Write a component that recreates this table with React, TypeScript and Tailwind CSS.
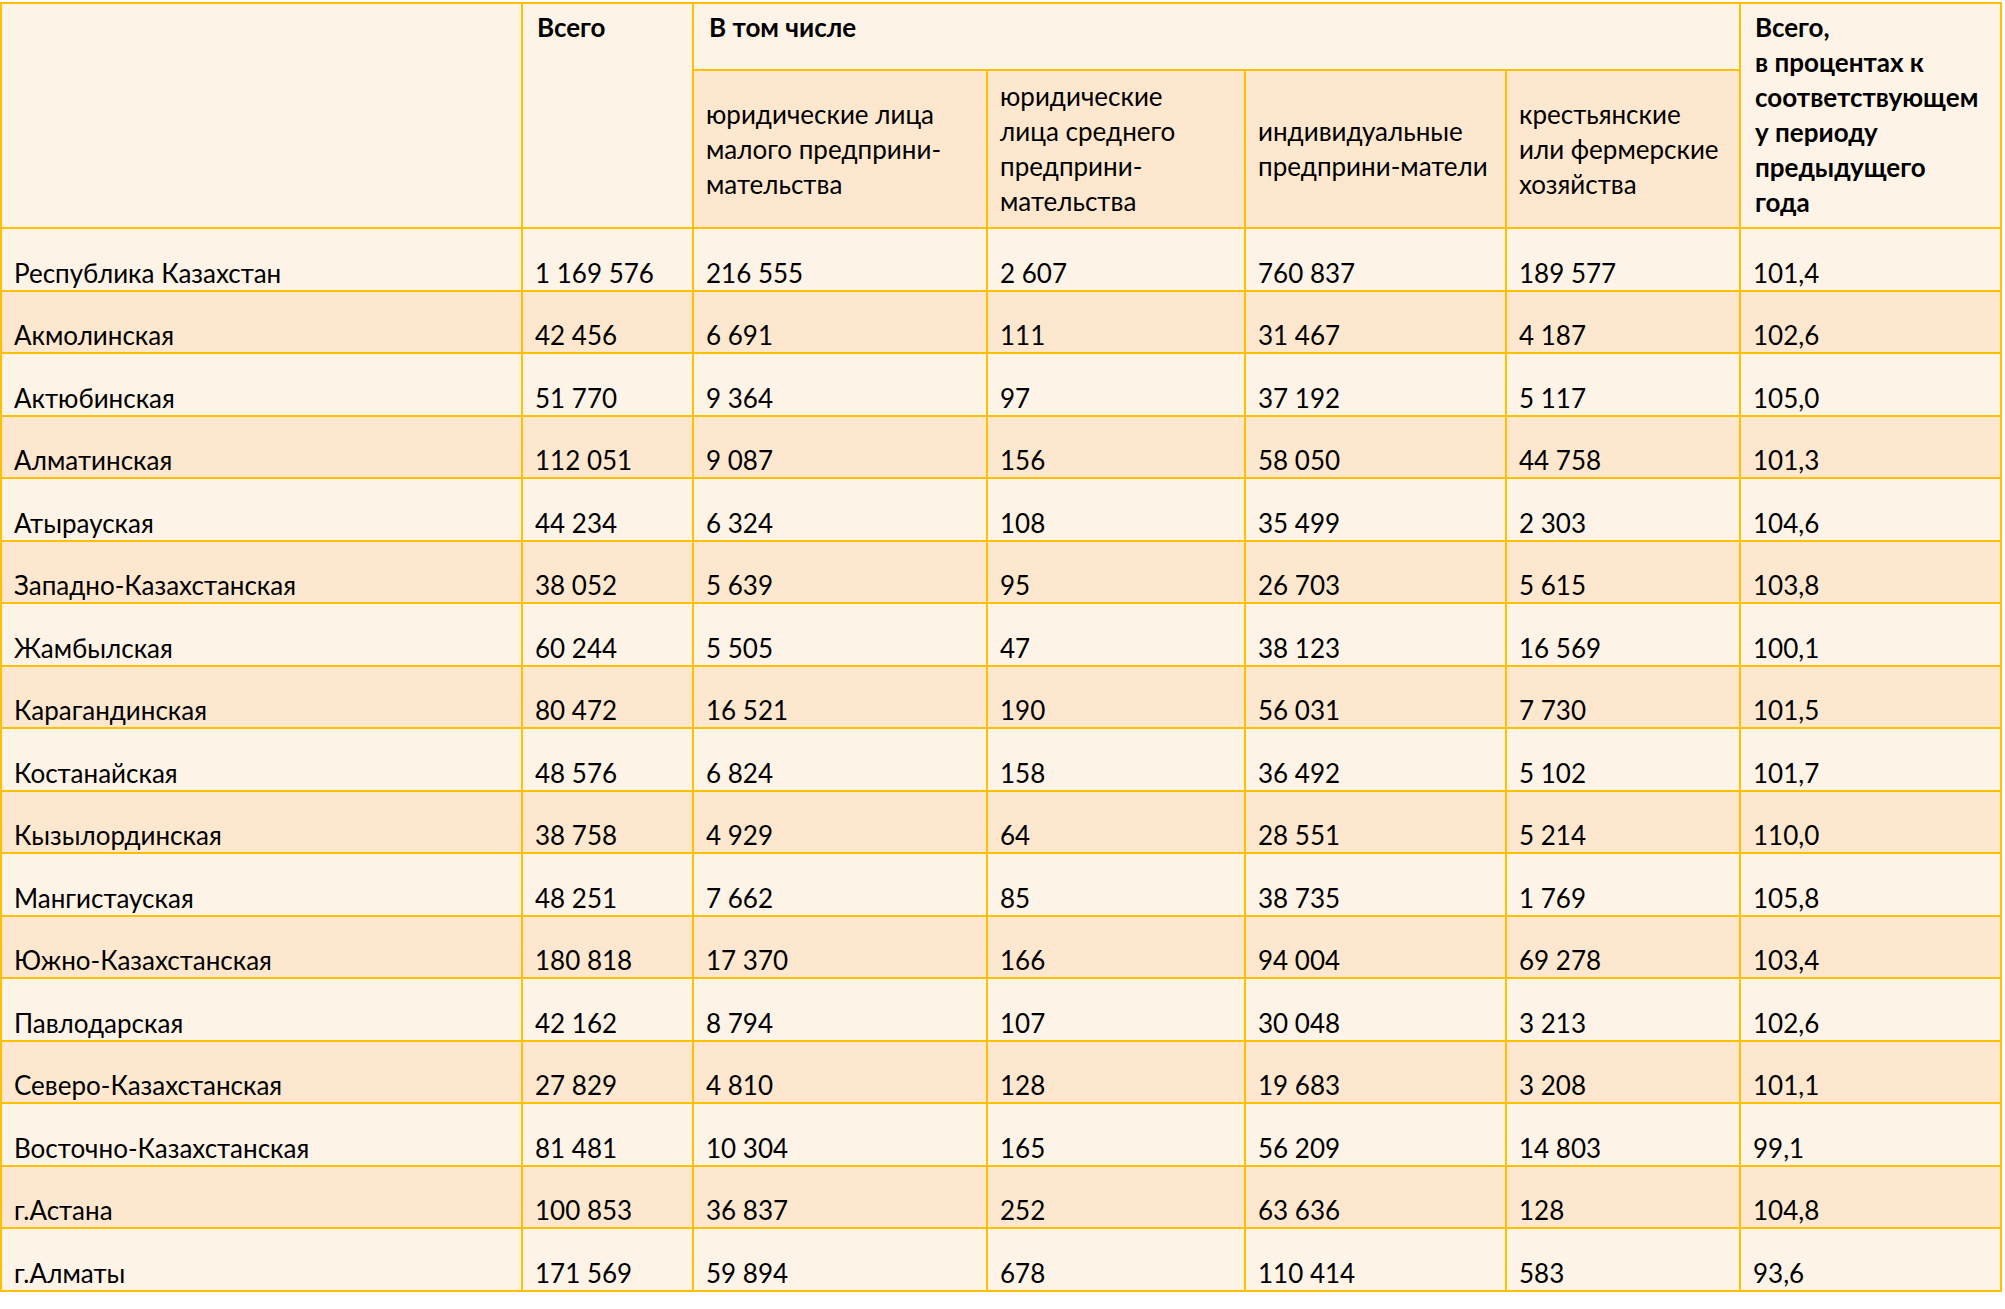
import React from "react";

const rows: string[][] = [
  ["Республика Казахстан", "1 169 576", "216 555", "2 607", "760 837", "189 577", "101,4"],
  ["Акмолинская", "42 456", "6 691", "111", "31 467", "4 187", "102,6"],
  ["Актюбинская", "51 770", "9 364", "97", "37 192", "5 117", "105,0"],
  ["Алматинская", "112 051", "9 087", "156", "58 050", "44 758", "101,3"],
  ["Атырауская", "44 234", "6 324", "108", "35 499", "2 303", "104,6"],
  ["Западно-Казахстанская", "38 052", "5 639", "95", "26 703", "5 615", "103,8"],
  ["Жамбылская", "60 244", "5 505", "47", "38 123", "16 569", "100,1"],
  ["Карагандинская", "80 472", "16 521", "190", "56 031", "7 730", "101,5"],
  ["Костанайская", "48 576", "6 824", "158", "36 492", "5 102", "101,7"],
  ["Кызылординская", "38 758", "4 929", "64", "28 551", "5 214", "110,0"],
  ["Мангистауская", "48 251", "7 662", "85", "38 735", "1 769", "105,8"],
  ["Южно-Казахстанская", "180 818", "17 370", "166", "94 004", "69 278", "103,4"],
  ["Павлодарская", "42 162", "8 794", "107", "30 048", "3 213", "102,6"],
  ["Северо-Казахстанская", "27 829", "4 810", "128", "19 683", "3 208", "101,1"],
  ["Восточно-Казахстанская", "81 481", "10 304", "165", "56 209", "14 803", "99,1"],
  ["г.Астана", "100 853", "36 837", "252", "63 636", "128", "104,8"],
  ["г.Алматы", "171 569", "59 894", "678", "110 414", "583", "93,6"],
];

const light = "bg-[#FEF3E7]";
const dark = "bg-[#FDE8CF]";

function Lines({ lines }: { lines: string[] }) {
  return (
    <>
      {lines.map((l, i) => (
        <div key={i} className="whitespace-nowrap">
          {l}
        </div>
      ))}
    </>
  );
}

export default function App() {
  return (
    <div className="w-[2005px] h-[1309px] bg-white pt-[2px] font-['Lato','Open_Sans',sans-serif] text-[26px] leading-[35px] text-black">
      <div className="grid w-[2002px] grid-cols-[519px_169px_292px_256px_259px_232px_259px] grid-rows-[65px_156px_repeat(17,60.5px)] gap-[2px] bg-[#FFC000] p-[2px]">
        {/* header */}
        <div className={`${light} row-span-2`} />
        <div className={`${light} row-span-2 pl-[14px] pt-[6px] font-bold`}>Всего</div>
        <div className={`${light} col-span-4 pl-[15px] pt-[6px] font-bold`}>В том числе</div>
        <div className={`${light} row-span-2 pl-[14px] pt-[6px] font-bold`}>
          <Lines lines={["Всего,", "в процентах к", "соответствующем", "у периоду", "предыдущего", "года"]} />
        </div>
        <div className={`${dark} flex flex-col justify-center pl-3`}>
          <Lines lines={["юридические лица", "малого предприни-", "мательства"]} />
        </div>
        <div className={`${dark} flex flex-col justify-center pl-3`}>
          <Lines lines={["юридические", "лица среднего", "предприни-", "мательства"]} />
        </div>
        <div className={`${dark} flex flex-col justify-center pl-3`}>
          <Lines lines={["индивидуальные", "предприни-матели"]} />
        </div>
        <div className={`${dark} flex flex-col justify-center pl-3`}>
          <Lines lines={["крестьянские", "или фермерские", "хозяйства"]} />
        </div>

        {/* body */}
        {rows.map((r, ri) =>
          r.map((c, ci) => (
            <div
              key={`${ri}-${ci}`}
              className={`${ri % 2 === 0 ? light : dark} flex items-end whitespace-nowrap pl-3 leading-[33px]`}
            >
              {c}
            </div>
          ))
        )}
      </div>
    </div>
  );
}
